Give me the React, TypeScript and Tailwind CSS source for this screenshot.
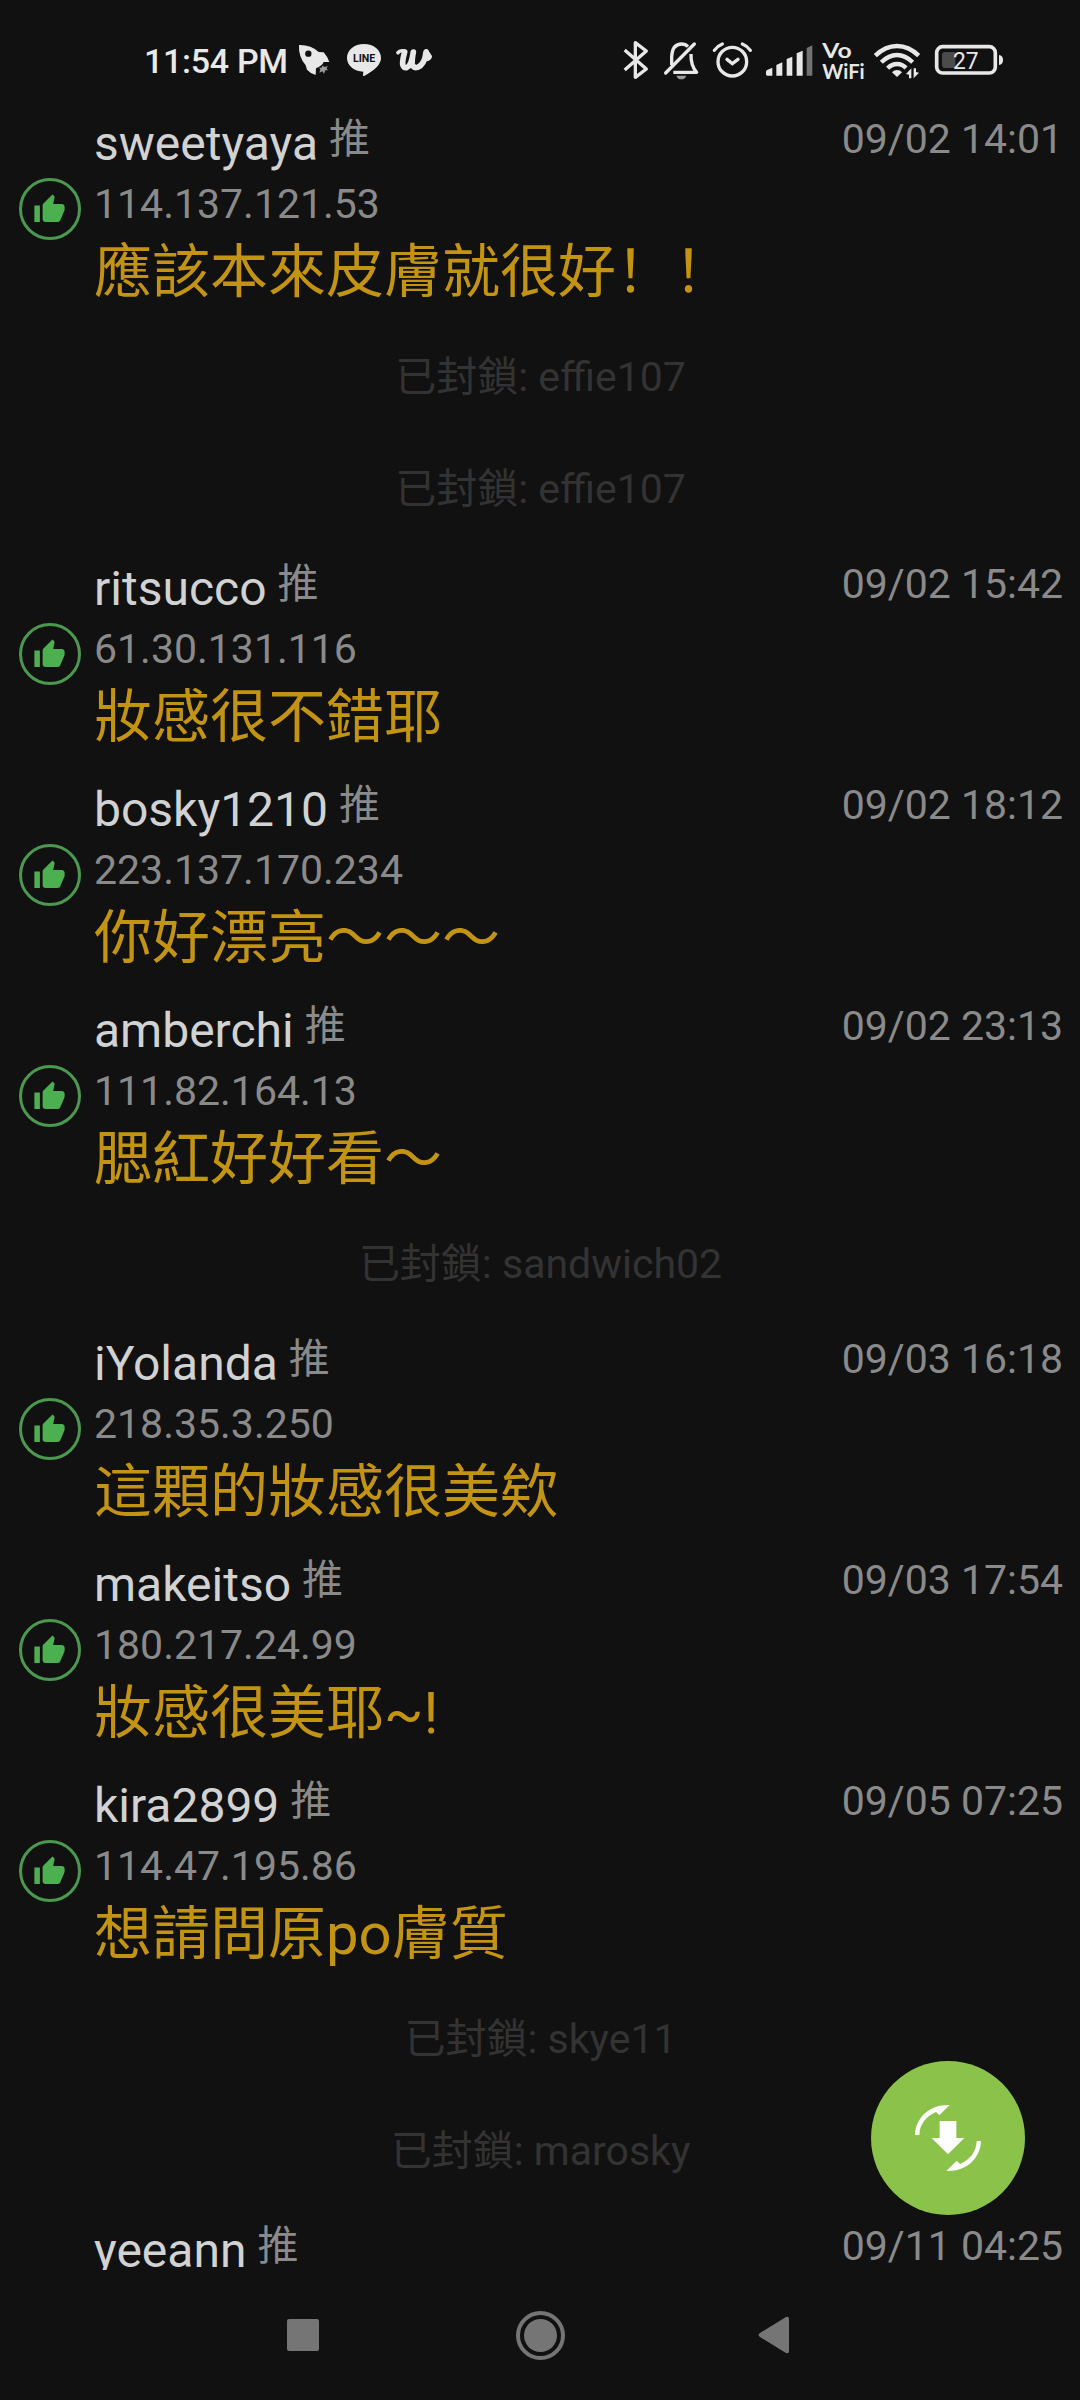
import { FC } from "react";
import { MdThumbUp } from "react-icons/md";

type Row =
  | { type: "push"; user: string; ip: string; date: string; text: string }
  | { type: "blocked"; user: string };

const rows: Row[] = [
  {
    type: "push",
    user: "sweetyaya",
    ip: "114.137.121.53",
    date: "09/02 14:01",
    text: "應該本來皮膚就很好！！",
  },
  { type: "blocked", user: "effie107" },
  { type: "blocked", user: "effie107" },
  {
    type: "push",
    user: "ritsucco",
    ip: "61.30.131.116",
    date: "09/02 15:42",
    text: "妝感很不錯耶",
  },
  {
    type: "push",
    user: "bosky1210",
    ip: "223.137.170.234",
    date: "09/02 18:12",
    text: "你好漂亮～～～",
  },
  {
    type: "push",
    user: "amberchi",
    ip: "111.82.164.13",
    date: "09/02 23:13",
    text: "腮紅好好看～",
  },
  { type: "blocked", user: "sandwich02" },
  {
    type: "push",
    user: "iYolanda",
    ip: "218.35.3.250",
    date: "09/03 16:18",
    text: "這顆的妝感很美欸",
  },
  {
    type: "push",
    user: "makeitso",
    ip: "180.217.24.99",
    date: "09/03 17:54",
    text: "妝感很美耶~!",
  },
  {
    type: "push",
    user: "kira2899",
    ip: "114.47.195.86",
    date: "09/05 07:25",
    text: "想請問原po膚質",
  },
  { type: "blocked", user: "skye11" },
  { type: "blocked", user: "marosky" },
  {
    type: "push",
    user: "yeeann",
    ip: "",
    date: "09/11 04:25",
    text: "",
  },
];

const StatusBar: FC = () => {
  return (
    <div className="flex h-[100px] shrink-0 justify-between pt-[30px] pl-36 pr-[76px] text-[#e8e8e8]">
      <div className="flex h-[60px]">
        <span className="w-[151px] whitespace-nowrap text-[34px] font-medium leading-[62px] tracking-[-0.3px]">
          11:54 PM
        </span>
        {/* rocket */}
        <svg className="h-[60px] w-[38px]" viewBox="495 0 114 180">
          <path
            fill="currentColor"
            d="M507 45Q543 44 566 66L581 67Q594 82 598 96L581 96Q576 108 558 115L557 135Q542 131 531 119L527 106Q505 80 507 45Z"
          />
          <circle cx="535" cy="71" r="9.5" fill="#111111" />
          <path
            fill="#9a9a9a"
            d="M577 107L585 111L593 108L590 116L594 121L586 121L582 131L577 124L568 128L571 118L567 113L575 113Z"
          />
        </svg>
        {/* LINE */}
        <svg className="ml-[11px] h-[60px] w-[40px]" viewBox="642 0 120 180">
          <path
            fill="currentColor"
            d="M702 42C731 42 753 60 753 84C753 104 733 122 702 138C697 139 700 132 700 125C672 124 651 107 651 84C651 60 673 42 702 42Z"
          />
          <text
            x="669"
            y="97"
            textLength="67"
            lengthAdjust="spacingAndGlyphs"
            fontSize="32"
            fontWeight="700"
            fill="#111111"
          >
            LINE
          </text>
        </svg>
        {/* wattpad */}
        <svg className="ml-[10px] h-[60px] w-[40px]" viewBox="792 0 120 180">
          <g
            fill="none"
            stroke="currentColor"
            strokeLinecap="round"
            strokeLinejoin="round"
          >
            <path strokeWidth="11" d="M804 68Q810 60 822 63" />
            <path
              strokeWidth="17"
              d="M824 66Q817 92 818 103Q820 115 830 113Q844 108 850 66Q845 92 847 103Q850 115 863 112Q884 104 888 66"
            />
            <path strokeWidth="12" d="M889 63L900 80Q898 86 890 88" />
          </g>
        </svg>
      </div>

      <div className="flex h-[60px]">
        {/* bluetooth */}
        <svg className="h-[60px] w-[28px]" viewBox="36 0 84 180">
          <path
            fill="none"
            stroke="currentColor"
            strokeWidth="10"
            strokeLinejoin="round"
            d="M44 60L109 117L76 142V38L109 63L44 120"
          />
        </svg>
        {/* muted bell */}
        <svg className="ml-[12px] h-[60px] w-[38px]" viewBox="156 0 114 180">
          <g fill="none" stroke="currentColor" strokeWidth="10">
            <path strokeLinecap="round" d="M253 42L167 129" />
            <path d="M185 105V80Q187 42 215 42Q226 42 234 50" />
            <path d="M243 72Q242 107 260 127H190" strokeLinejoin="round" />
          </g>
          <path
            fill="currentColor"
            opacity="0.65"
            d="M199 137H229Q225 148 214 148Q203 148 199 137Z"
          />
        </svg>
        {/* alarm clock */}
        <svg className="ml-[10px] h-[60px] w-[44px]" viewBox="300 0 132 180">
          <g fill="none" stroke="currentColor" strokeWidth="10">
            <circle cx="367" cy="95" r="43" />
            <path strokeLinecap="round" d="M351 88L367 101L384 88" />
            <path
              strokeLinecap="round"
              d="M313 61Q322 48 337 42M397 42Q412 48 421 61"
            />
          </g>
        </svg>
        {/* signal */}
        <svg
          className="ml-[10px] h-[60px] w-[50px]"
          viewBox="462 0 150 180"
          fill="currentColor"
        >
          <path d="M468 125Q468 121 473 119L487 113V137H472Q468 137 468 133Z" />
          <path d="M499 105L517 97V137H499Z" />
          <path d="M530 87L547 80V137H530Z" />
          <path d="M560 70L578 62V137H560Z" />
          <path d="M590 54L607 46V137H590Z" opacity="0.45" />
        </svg>
        <svg
          className="ml-[7px] h-[60px] w-[46px] overflow-visible font-['Lato',sans-serif]"
          viewBox="633 0 138 180"
          fill="currentColor"
        >
          <text
            x="637"
            y="84"
            fontSize="65"
            fontWeight="700"
            textLength="88"
            lengthAdjust="spacingAndGlyphs"
          >
            Vo
          </text>
          <text
            x="637"
            y="147"
            fontSize="64"
            fontWeight="700"
            textLength="127"
            lengthAdjust="spacingAndGlyphs"
          >
            WiFi
          </text>
        </svg>
        {/* wifi */}
        <svg className="ml-[5px] h-[60px] w-[50px]" viewBox="786 0 150 180">
          <g fill="none" stroke="currentColor" strokeWidth="13">
            <path d="M796 77Q826 48 861 48Q896 48 926 77" />
            <path d="M814 97Q836 75 861 75Q886 75 908 97" />
            <path d="M833 115Q845 102 861 102Q877 102 888 114" />
          </g>
          <path
            fill="currentColor"
            d="M861 120Q870 120 876 127L861 141L846 127Q852 120 861 120Z"
          />
          <path
            fill="currentColor"
            d="M904 115V145H897V134L888 132ZM911 145V115H918V126L927 128Z"
          />
        </svg>
        {/* battery */}
        <svg className="ml-[12px] h-[60px] w-[70px]" viewBox="972 0 210 180">
          <rect
            x="980"
            y="50"
            width="176"
            height="79"
            rx="18"
            fill="none"
            stroke="currentColor"
            strokeWidth="11"
          />
          <path
            fill="#4b4b4b"
            d="M1006 66H1036V114H1006Q996 114 996 104V76Q996 66 1006 66Z"
          />
          <path
            fill="currentColor"
            d="M1167 75Q1179 76 1179 90Q1179 104 1167 105Z"
          />
          <text
            x="1029"
            y="116"
            fontSize="70"
            fill="currentColor"
            textLength="77"
            lengthAdjust="spacingAndGlyphs"
          >
            27
          </text>
        </svg>
      </div>
    </div>
  );
};

const PushRow: FC<{ user: string; ip: string; date: string; text: string }> = ({
  user,
  ip,
  date,
  text,
}) => {
  return (
    <div className="flex h-[221px] shrink-0 pl-[19px] pr-[17px]">
      <div className="mt-[78px] flex size-[62px] shrink-0 items-center justify-center rounded-full border-3 border-[#4b984f]">
        <MdThumbUp className="mr-[1px] size-[33px] text-[#4caf50]" />
      </div>
      <div className="ml-[13px] flex grow flex-col whitespace-nowrap">
        <div className="flex text-[41px] text-[#8a8a8a]">
          <span className="mt-4 text-[48px] leading-[56px] text-[#d2d2d2]">
            {user}
          </span>
          <span className="ml-[11px] mt-[15px] leading-[48px]">推</span>
          <span className="ml-auto mt-[15px] leading-[48px]">{date}</span>
        </div>
        <span className="mt-2 h-12 text-[41px] leading-[48px] text-[#8a8a8a]">
          {ip}
        </span>
        <span className="mt-1 h-20 text-[58px] leading-[80px] text-[#c39411]">
          {text}
        </span>
      </div>
    </div>
  );
};

const BlockedRow: FC<{ user: string }> = ({ user }) => {
  return (
    <div className="flex h-28 shrink-0 items-center justify-center pl-px text-[41px] leading-[48px] text-[#333333]">
      已封鎖: {user}
    </div>
  );
};

const NavBar: FC = () => {
  return (
    <div className="flex h-[130px] shrink-0 items-center justify-between pl-[287px] pr-[290px]">
      <div className="size-8 rounded-xs bg-[#757575]" />
      <div className="ml-1 flex size-[49px] items-center justify-center rounded-full border-4 border-[#757575]">
        <div className="size-[33px] rounded-full bg-[#757575]" />
      </div>
      <svg className="h-[38px] w-8" viewBox="0 0 32 38">
        <path
          fill="#757575"
          d="M2 17L28 1Q31 0 31 3V35Q31 38 28 37L2 21Q-1 19 2 17Z"
        />
      </svg>
    </div>
  );
};

const App: FC = () => {
  return (
    <div className="relative flex h-[2400px] w-[1080px] flex-col overflow-hidden bg-[#111111] font-['Roboto','Noto_Sans_CJK_SC',sans-serif]">
      <StatusBar />
      <div className="flex h-[2170px] shrink-0 flex-col overflow-hidden">
        {rows.map((row, i) =>
          row.type === "push" ? (
            <PushRow key={i} {...row} />
          ) : (
            <BlockedRow key={i} user={row.user} />
          )
        )}
      </div>
      <NavBar />
      <button
        type="button"
        className="absolute bottom-[185px] right-[55px] flex size-[154px] items-center justify-center rounded-full bg-[#8bc34a]"
      >
        <svg className="size-[72px]" viewBox="-108 -108 216 216">
          <path
            fill="#ffffff"
            d="M-25 -51H25V0H49L0 49L-49 0H-25ZM-99 -9C-97 -62 -55 -101 5 -99L-26 -68L-36 -78C-65 -66 -85 -42 -86 -9ZM99 9C97 62 55 101 -5 99L26 68L36 78C65 66 85 42 86 9Z"
          />
        </svg>
      </button>
    </div>
  );
};

export default App;
